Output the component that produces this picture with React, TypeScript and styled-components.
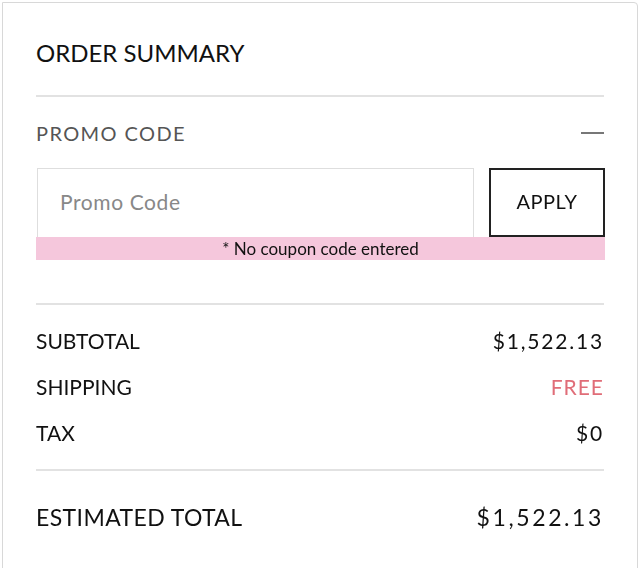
import styled, { createGlobalStyle } from "styled-components";

const GlobalStyle = createGlobalStyle`
  body {
    margin: 0;
    background: #fff;
    font-family: "Lato", "Liberation Sans", sans-serif;
  }
  * { box-sizing: border-box; }
`;

export default function App() {
  return (
    <Page>
      <GlobalStyle />
      <Card>
        <Title>ORDER SUMMARY</Title>
        <Divider />
        <PromoHeader>
          <PromoLabel>PROMO CODE</PromoLabel>
          <Collapse />
        </PromoHeader>
        <PromoForm>
          <InputRow>
            <CodeInput placeholder="Promo Code" autoFocus />
            <ApplyButton>APPLY</ApplyButton>
          </InputRow>
          <ErrorBar>* No coupon code entered</ErrorBar>
        </PromoForm>
        <Divider $gap={43} />
        <Lines>
          <Line>
            <LineLabel>SUBTOTAL</LineLabel>
            <LineValue>$1,522.13</LineValue>
          </Line>
          <Line>
            <LineLabel>SHIPPING</LineLabel>
            <LineValue $free>FREE</LineValue>
          </Line>
          <Line>
            <LineLabel>TAX</LineLabel>
            <LineValue>$0</LineValue>
          </Line>
        </Lines>
        <Divider $gap={19} />
        <TotalRow>
          <TotalLabel>ESTIMATED TOTAL</TotalLabel>
          <TotalValue>$1,522.13</TotalValue>
        </TotalRow>
      </Card>
    </Page>
  );
}

const Page = styled.div`
  padding: 2px 2px 0 2px;
`;

const Card = styled.div`
  width: 636px;
  min-height: 600px;
  border: 1px solid #d8d8d8;
  border-radius: 0 4px 0 0;
  padding: 30px 33px 0 33px;
  display: flex;
  flex-direction: column;
`;

const Title = styled.h2`
  margin: 0;
  font-size: 24px;
  font-weight: 400;
  letter-spacing: 0;
  color: #111;
  line-height: 40px;
`;

const Divider = styled.hr<{ $gap?: number }>`
  margin: ${(p) => p.$gap ?? 22}px 0 0 0;
  border: 0;
  border-top: 2px solid #e2e2e2;
  width: 568px;
`;

const PromoHeader = styled.div`
  display: flex;
  align-items: center;
  justify-content: space-between;
  width: 568px;
  margin-top: 18px;
  height: 36px;
`;

const PromoLabel = styled.span`
  font-size: 20px;
  color: #555;
  letter-spacing: 1.4px;
`;

const Collapse = styled.span`
  width: 23px;
  height: 2px;
  background: #777;
`;

const PromoForm = styled.div`
  margin-top: 17px;
  width: 569px;
`;

const InputRow = styled.div`
  display: flex;
  justify-content: space-between;
  padding-left: 1px;
`;

const CodeInput = styled.input`
  width: 437px;
  height: 69px;
  border: 1px solid #dedede;
  border-bottom: 0;
  padding: 0 0 4px 22px;
  font-family: "Lato", "Liberation Sans", sans-serif;
  font-size: 21px;
  letter-spacing: 0.6px;
  color: #333;
  outline: none;
  caret-color: #333;
  &::placeholder {
    color: #888;
  }
`;

const ApplyButton = styled.button`
  width: 116px;
  height: 69px;
  border: 2px solid #222;
  background: #fff;
  padding-bottom: 4px;
  font-family: "Lato", "Liberation Sans", sans-serif;
  font-size: 20px;
  color: #111;
  letter-spacing: 0.5px;
`;

const ErrorBar = styled.div`
  background: #f5c7dc;
  height: 23px;
  line-height: 23px;
  text-align: center;
  font-size: 17px;
  color: #111;
`;

const Lines = styled.div`
  margin-top: 18px;
  display: flex;
  flex-direction: column;
  gap: 11px;
  width: 568px;
`;

const Line = styled.div`
  display: flex;
  justify-content: space-between;
  align-items: center;
  height: 35px;
`;

const LineLabel = styled.span`
  font-size: 21px;
  color: #111;
`;

const LineValue = styled.span<{ $free?: boolean }>`
  font-size: 21px;
  letter-spacing: ${(p) => (p.$free ? 1 : 1.8)}px;
  color: ${(p) => (p.$free ? "#e06d78" : "#111")};
`;

const TotalRow = styled.div`
  display: flex;
  justify-content: space-between;
  align-items: center;
  width: 568px;
  margin-top: 26px;
  height: 40px;
`;

const TotalLabel = styled.span`
  font-size: 23px;
  color: #111;
  letter-spacing: 0.4px;
`;

const TotalValue = styled.span`
  font-size: 23px;
  color: #111;
  letter-spacing: 2.6px;
`;
